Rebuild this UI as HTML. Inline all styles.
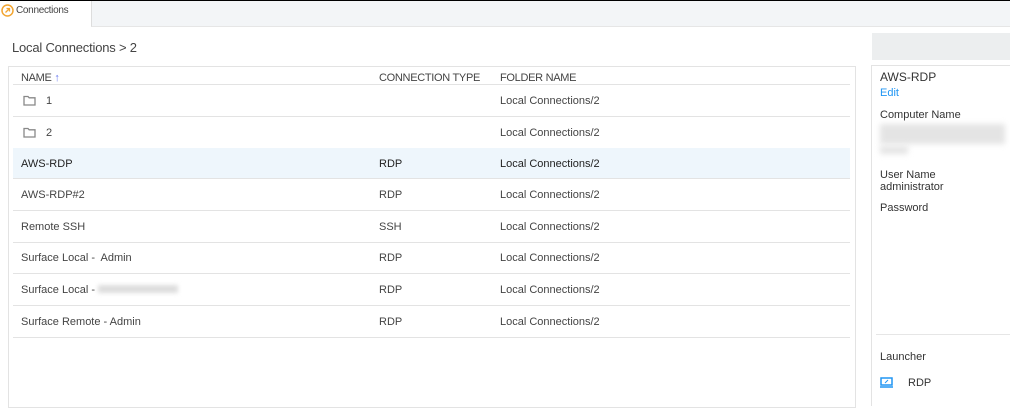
<!DOCTYPE html><html><head><style>
body{margin:0;width:1010px;height:400px;overflow:hidden;background:#fff;font-family:"Liberation Sans",sans-serif;color:#333;position:relative}
.a{position:absolute}
.t{font-size:11px;color:#333}
.row{position:absolute;left:13px;width:837px;height:31px;border-bottom:1px solid #e3e3e3;font-size:11px;color:#444}
.row span{position:absolute;top:10px}
.row svg{position:absolute;left:10px;top:10px}
</style></head><body>
<div class="a" style="left:0;top:0;width:1010px;height:1px;background:#000"></div>
<div class="a" style="left:91px;top:1px;width:919px;height:25px;background:#f3f5f7;border-left:1px solid #ddd;border-bottom:1px solid #e6e6e6"></div>
<svg class="a" style="left:1px;top:4px" width="13" height="13" viewBox="0 0 13 13"><circle cx="6.5" cy="6.5" r="5.5" fill="none" stroke="#f2a531" stroke-width="1.5"/><path d="M4.5 8.5L8.5 4.5M5.5 4.5H8.5V7.5" fill="none" stroke="#f2a531" stroke-width="1.3"/></svg>
<div class="a" style="left:16px;top:5px;font-size:10px;color:#444;letter-spacing:-0.3px">Connections</div>
<div class="a" style="left:12px;top:40px;font-size:13px;color:#444;letter-spacing:-0.2px">Local Connections &gt; 2</div>
<div class="a" style="left:8px;top:66px;width:846px;height:340px;border:1px solid #e3e3e3"></div>
<div class="a" style="left:13px;top:84px;width:837px;height:1px;background:#e3e3e3"></div>
<div class="a t" style="left:21px;top:72px;color:#444;letter-spacing:-0.3px">NAME <span style="color:#6b7cf0">↑</span></div>
<div class="a t" style="left:379px;top:72px;color:#444;letter-spacing:-0.3px">CONNECTION TYPE</div>
<div class="a t" style="left:500px;top:72px;color:#444;letter-spacing:-0.3px">FOLDER NAME</div>
<div class="row" style="top:85px"><svg width="13" height="11" viewBox="0 0 13 11"><path d="M1 1.5H5L6.2 2.8H12V10H1Z" fill="none" stroke="#888" stroke-width="1.3"/></svg><span style="left:33px">1</span><span style="left:487px">Local Connections/2</span></div>
<div class="row" style="top:117px"><svg width="13" height="11" viewBox="0 0 13 11"><path d="M1 1.5H5L6.2 2.8H12V10H1Z" fill="none" stroke="#888" stroke-width="1.3"/></svg><span style="left:33px">2</span><span style="left:487px">Local Connections/2</span></div>
<div class="row" style="top:148px;height:30px;background:#eef6fc;color:#222"><span style="left:8px">AWS-RDP</span><span style="left:366px">RDP</span><span style="left:487px">Local Connections/2</span></div>
<div class="row" style="top:179px"><span style="left:8px">AWS-RDP#2</span><span style="left:366px">RDP</span><span style="left:487px">Local Connections/2</span></div>
<div class="row" style="top:211px"><span style="left:8px">Remote SSH</span><span style="left:366px">SSH</span><span style="left:487px">Local Connections/2</span></div>
<div class="row" style="top:242px"><span style="left:8px">Surface Local -&nbsp; Admin</span><span style="left:366px">RDP</span><span style="left:487px">Local Connections/2</span></div>
<div class="row" style="top:274px"><span style="left:8px">Surface Local - <i style="display:inline-block;width:80px;height:8px;background:#ddd;filter:blur(2px)"></i></span><span style="left:366px">RDP</span><span style="left:487px">Local Connections/2</span></div>
<div class="row" style="top:306px"><span style="left:8px">Surface Remote - Admin</span><span style="left:366px">RDP</span><span style="left:487px">Local Connections/2</span></div>
<div class="a" style="left:872px;top:33px;width:138px;height:27px;background:#eceeef"></div>
<div class="a" style="left:871px;top:65px;width:139px;height:340px;border-left:1px solid #e3e3e3;border-top:1px solid #e3e3e3"></div>
<div class="a" style="left:880px;top:70px;font-size:12px;color:#333">AWS-RDP</div>
<div class="a" style="left:880px;top:87px;font-size:11px;color:#2196f3">Edit</div>
<div class="a t" style="left:880px;top:109px">Computer Name</div>
<div class="a" style="left:880px;top:124px;width:125px;height:20px;background:#e4e4e4;filter:blur(3px)"></div>
<div class="a" style="left:880px;top:146px;width:28px;height:8px;background:#e4e4e4;filter:blur(3px)"></div>
<div class="a t" style="left:880px;top:169px">User Name</div>
<div class="a t" style="left:880px;top:181px">administrator</div>
<div class="a t" style="left:880px;top:202px">Password</div>
<div class="a" style="left:876px;top:334px;width:134px;height:1px;background:#e6e6e6"></div>
<div class="a t" style="left:880px;top:351px">Launcher</div>
<svg class="a" style="left:880px;top:377px" width="14" height="11" viewBox="0 0 14 11"><rect x="1" y="1" width="11" height="7" fill="none" stroke="#2196f3" stroke-width="1.5"/><path d="M0 10H13" stroke="#2196f3" stroke-width="1.5"/><path d="M5 6L8 3" stroke="#2196f3"/></svg>
<div class="a t" style="left:908px;top:377px">RDP</div>
</body></html>
